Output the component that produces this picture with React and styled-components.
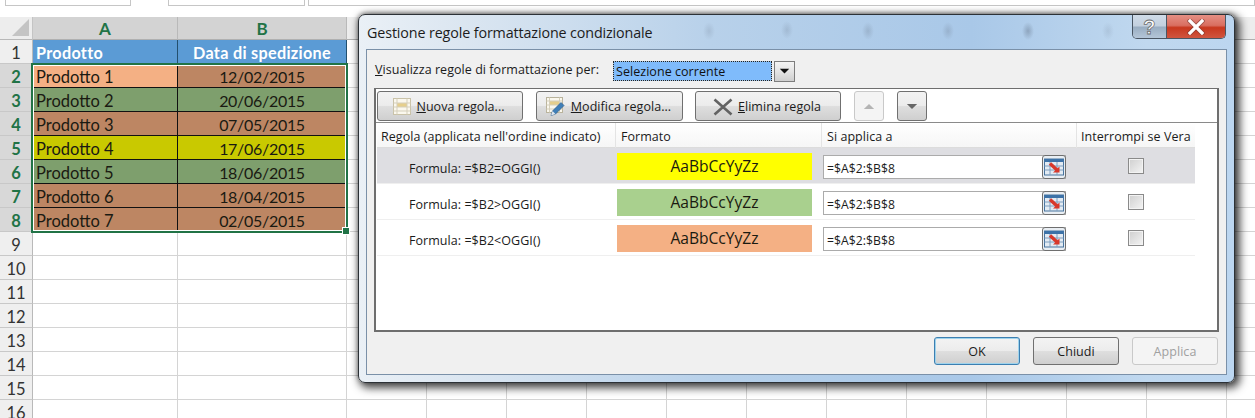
import React from "react";
import styled, { createGlobalStyle } from "styled-components";

const Global = createGlobalStyle`
  html, body { margin: 0; padding: 0; background: #fff; }
  #root { width: 1255px; height: 418px; overflow: hidden; }
`;

const Page = styled.div`
  position: relative;
  width: 1255px;
  height: 418px;
  overflow: hidden;
  background: #fff;
`;

const FormulaStrip = styled.div`
  height: 17px;
  box-sizing: border-box;
  padding-left: 5px;
  display: flex;
  align-items: flex-start;
`;
const StripBox = styled.div`
  height: 6px;
  width: ${(p) => p.$w}px;
  margin-right: ${(p) => p.$gap}px;
  box-sizing: border-box;
  border: 1px solid #c6c6c6;
  border-top: 0;
  background: #fff;
  flex: ${(p) => (p.$grow ? "1" : "none")};
`;

const Sheet = styled.div`
  position: relative;
  display: grid;
  grid-template-columns: 33px 145px 169px repeat(12, 80px);
  grid-template-rows: 23px repeat(16, 24px);
  font-family: Lato, "Liberation Sans", sans-serif;
`;
const Corner = styled.div`
  background: #ededed;
  border-right: 1px solid #c4c4c4;
  border-bottom: 1px solid #b8b8b8;
  box-sizing: border-box;
  display: flex;
  align-items: flex-end;
  justify-content: flex-end;
  padding: 0 3px 3px 0;
`;
const ColHead = styled.div`
  box-sizing: border-box;
  background: ${(p) => (p.$sel ? "#d3d3d3" : "#ededed")};
  border-right: 1px solid #b9b9b9;
  border-bottom: 1px solid #b0b0b0;
  color: #217346;
  font-weight: 700;
  font-size: 17px;
  line-height: 23px;
  text-align: center;
`;
const RowHead = styled.div`
  box-sizing: border-box;
  background: ${(p) => (p.$sel ? "#d8d8d8" : "#efefef")};
  border-right: 1px solid #b9b9b9;
  border-bottom: 1px solid #c8c8c8;
  color: ${(p) => (p.$sel ? "#217346" : "#333")};
  font-weight: ${(p) => (p.$sel ? 700 : 400)};
  font-size: 16.5px;
  padding-top: 3px;
  line-height: 20px;
  text-align: center;
`;
const Cell = styled.div`
  box-sizing: border-box;
  border-right: 1px solid #d4d4d4;
  border-bottom: 1px solid #d4d4d4;
`;
const DataCell = styled.div`
  box-sizing: border-box;
  background: ${(p) => p.$bg};
  border-right: 1px solid #111;
  border-bottom: 1px solid #111;
  color: #1a1a12;
  font-size: ${(p) => (p.$center ? 16 : 16.5)}px;
  letter-spacing: ${(p) => (p.$center ? -0.3 : 0)}px;
  padding: 3px 3px 0;
  line-height: 20px;
  text-align: ${(p) => (p.$center ? "center" : "left")};
`;
const TitleCell = styled.div`
  box-sizing: border-box;
  background: #5b9bd5;
  border-right: 1px solid #23506f;
  border-bottom: 1px solid #23506f;
  color: #fff;
  font-size: 16.2px;
  font-weight: 700;
  letter-spacing: 0.3px;
  padding: 2px 3px 0;
  line-height: 21px;
  text-align: ${(p) => (p.$center ? "center" : "left")};
`;
const Selection = styled.div`
  position: absolute;
  left: 31px;
  top: 46px;
  width: 317px;
  height: 170px;
  box-sizing: border-box;
  border: 2px solid #217346;
  box-shadow: inset 0 0 0 1px #fff;
  pointer-events: none;
`;
const Handle = styled.div`
  position: absolute;
  right: -4px;
  bottom: -4px;
  width: 6px;
  height: 6px;
  background: #217346;
  border: 1px solid #fff;
`;

const Dialog = styled.div`
  position: absolute;
  left: 358px;
  top: 14px;
  width: 877px;
  height: 369px;
  box-sizing: border-box;
  padding: 0 7px 7px 7px;
  display: flex;
  flex-direction: column;
  border: 1px solid #2c3136;
  border-radius: 7px;
  box-shadow: 3px 3px 9px 2px rgba(0, 0, 0, 0.72), 0 -1px 4px rgba(0, 0, 0, 0.35);
  background:
    radial-gradient(ellipse 6px 9px at 350px 16px, rgba(110, 125, 145, 0.22), transparent),
    radial-gradient(ellipse 6px 9px at 428px 15px, rgba(110, 125, 145, 0.25), transparent),
    radial-gradient(ellipse 6px 9px at 509px 16px, rgba(110, 125, 145, 0.3), transparent),
    radial-gradient(ellipse 6px 9px at 589px 16px, rgba(110, 125, 145, 0.3), transparent),
    radial-gradient(ellipse 6px 9px at 669px 16px, rgba(90, 105, 125, 0.4), transparent),
    radial-gradient(ellipse 6px 9px at 749px 16px, rgba(110, 125, 145, 0.18), transparent),
    linear-gradient(90deg, #eaf0f6 0, #dbe6f1 12%, #b8d1ea 40%, #a9c8e8 70%, #c0d8ef 90%, #bcd6f0 100%);
  font-family: "Open Sans", "Noto Sans", sans-serif;
  font-size: 12.5px;
  letter-spacing: 0.05px;
  color: #1b1b1b;
`;
const TitleBar = styled.div`
  flex: none;
  height: 34px;
  display: flex;
  align-items: center;
  justify-content: space-between;
`;
const TitleText = styled.div`
  font-size: 14.3px;
  padding: 1px 0 0 1px;
  letter-spacing: -0.12px;
  color: #1c1c1c;
`;
const Controls = styled.div`
  align-self: flex-start;
  display: flex;
  height: 24px;
  margin-right: 1px;
  border: 1px solid #4a5663;
  border-top: 0;
  border-radius: 0 0 5px 5px;
  overflow: hidden;
  box-sizing: border-box;
`;
const HelpButton = styled.div`
  width: 34px;
  box-sizing: border-box;
  padding-top: 1px;
  background: linear-gradient(#cfdbe8 0, #c3d0de 48%, #99adc1 52%, #b4c6d8 100%);
  border-right: 1px solid #4a5663;
  display: flex;
  align-items: center;
  justify-content: center;
  color: #fff;
  font-family: "Liberation Sans", sans-serif;
  font-size: 20px;
  line-height: 21px;
  font-weight: 700;
  -webkit-text-stroke: 0.8px #6b6b6b;
`;
const CloseButton = styled.div`
  width: 58px;
  background: linear-gradient(#e58f84 0, #d96f61 45%, #c8381f 55%, #d0553f 100%);
  display: flex;
  align-items: center;
  justify-content: center;
`;
const Content = styled.div`
  flex: 1;
  display: flex;
  flex-direction: column;
  padding: 0 7px 0 7px;
  background: #f0f0f0;
  border: 1px solid #7a90a8;
  box-sizing: border-box;
  min-height: 0;
`;
const ScopeRow = styled.div`
  flex: none;
  height: 38px;
  display: flex;
  align-items: center;
  padding-top: 4px;
  box-sizing: border-box;
`;
const ScopeLabel = styled.div`
  width: 239px;
  padding: 0 0 4px 1px;
  box-sizing: border-box;
  white-space: nowrap;
`;
const SelectValue = styled.div`
  width: 159px;
  height: 20px;
  box-sizing: border-box;
  background: #7fbbfb;
  outline: 1px dotted #222;
  outline-offset: -1px;
  border: 1px solid #9dc3e8;
  padding-left: 2px;
  line-height: 20px;
  color: #111;
`;
const SelectArrow = styled.div`
  width: 21px;
  height: 21px;
  margin-left: 2px;
  box-sizing: border-box;
  border: 1px solid #7d7d7d;
  background: linear-gradient(#f4f4f4, #e4e4e4 50%, #cfcfcf);
  display: flex;
  align-items: center;
  justify-content: center;
`;
const RulesPanel = styled.div`
  flex: none;
  height: 244px;
  box-sizing: border-box;
  background: #fff;
  border: 2px solid #6e6e6e;
  border-top-width: 1px;
  display: flex;
  flex-direction: column;
`;
const Toolbar = styled.div`
  flex: none;
  height: 34px;
  box-sizing: border-box;
  padding: 2px 0 0 1px;
  border-bottom: 1px solid #8a8a8a;
  display: flex;
  align-items: flex-start;
`;
const Btn = styled.div`
  width: ${(p) => p.$w}px;
  height: ${(p) => p.$h || 30}px;
  margin-right: ${(p) => p.$gap || 0}px;
  box-sizing: border-box;
  flex: none;
  display: flex;
  align-items: center;
  justify-content: center;
  padding-top: 1px;
  border-radius: 3px;
  border: 1px solid ${(p) => (p.$disabled ? "#c9c9c9" : p.$focus ? "#3c7fb1" : "#707070")};
  background: ${(p) =>
    p.$disabled
      ? "#f4f4f4"
      : "linear-gradient(#f3f3f3 0, #ececec 48%, #dedede 52%, #cfcfcf 100%)"};
  color: ${(p) => (p.$disabled ? "#a0a0a0" : "#1b1b1b")};
  box-shadow: ${(p) => (p.$focus ? "inset 0 0 0 1px #9fd3ec" : "none")};
`;
const ToolBtn = styled(Btn)`
  gap: 5px;
  padding-right: 2px;
`;
const HeaderRow = styled.div`
  display: grid;
  grid-template-columns: 239px 206px 255px 118px;
  height: 25px;
  width: 818px;
  margin-left: 1px;
  box-sizing: border-box;
  border-bottom: 1px solid #dcdcdc;
  background: linear-gradient(#fff, #f6f6f6);
`;
const HeaderCell = styled.div`
  padding-left: ${(p) => p.$pad}px;
  line-height: 27px;
  white-space: nowrap;
  border-right: 1px solid ${(p) => (p.$last ? "transparent" : "#e4e4e4")};
`;
const RuleRow = styled.div`
  display: grid;
  grid-template-columns: 239px 206px 255px 118px;
  width: 818px;
  margin-left: 1px;
  height: 36px;
  padding-top: 2px;
  align-items: center;
  border-bottom: 1px solid #efefef;
  box-sizing: border-box;
  background: ${(p) => (p.$sel ? "#dedee2" : "transparent")};
`;
const RuleName = styled.div`
  padding: 3px 0 0 32px;
`;
const Swatch = styled.div`
  width: 195px;
  height: 27px;
  margin-left: 1px;
  background: ${(p) => p.$bg};
  text-align: center;
  line-height: 27px;
  font-size: 15.6px;
  letter-spacing: 0;
  color: #1a1a10;
`;
const RangeField = styled.div`
  width: 243px;
  height: 24px;
  margin-left: 1px;
  box-sizing: border-box;
  background: #fff;
  border: 1px solid #ababab;
  display: flex;
  align-items: center;
  justify-content: space-between;
  padding-left: 3px;
  font-size: 12.2px;
`;
const RangeText = styled.span`
  padding-top: 3px;
`;
const RangeBtn = styled.div`
  width: 24px;
  height: 24px;
  margin: -1px;
  box-sizing: border-box;
  border: 1px solid #6f6f6f;
  border-radius: 3px;
  background: #e9eef3;
  display: flex;
  align-items: center;
  justify-content: center;
`;
const CheckCell = styled.div`
  display: flex;
  justify-content: center;
`;
const Check = styled.div`
  width: 16px;
  height: 16px;
  box-sizing: border-box;
  border: 1px solid #8a8a8a;
  background: linear-gradient(135deg, #cfcfcf, #f4f4f4);
  box-shadow: inset 0 0 0 1px #f3f3f3;
  margin-top: -2px;
`;
const Footer = styled.div`
  flex: 1;
  display: flex;
  justify-content: flex-end;
  gap: 13px;
  padding: 5px 1px 0 0;
  box-sizing: border-box;
`;

const GridIcon = () => (
  <svg width="18" height="17" viewBox="0 0 18 17">
    <rect x="0.5" y="0.5" width="17" height="16" fill="#fbf8ee" stroke="#c9c2a8" />
    <rect x="4" y="5" width="10" height="4" fill="#e6cf8c" />
    <path d="M0.5 5h17M0.5 9h17M0.5 13h17M4 0.5v16M14 0.5v16" stroke="#d5cfbb" fill="none" />
  </svg>
);
const EditIcon = () => (
  <svg width="20" height="19" viewBox="0 0 20 19">
    <rect x="0.5" y="0.5" width="16" height="15" fill="#fbf8ee" stroke="#b9b39c" />
    <rect x="3.5" y="4" width="10" height="4" fill="#e6cf8c" />
    <path d="M0.5 4h16M0.5 8h16M0.5 12h16M3.5 0.5v15M13.5 0.5v15" stroke="#d5cfbb" fill="none" />
    <path d="M5 18.5l1.5-4.5 8.5-8.5 3 3-8.5 8.5z" fill="#3f7fb8" stroke="#2c5a86" strokeWidth="0.7" />
    <path d="M5 18.5l1.5-4.5 3 3z" fill="#dfe6ee" />
  </svg>
);
const CrossIcon = () => (
  <svg width="20" height="18" viewBox="0 0 20 18">
    <path d="M1.5 1.5L18.5 16.5M18.5 1.5L1.5 16.5" stroke="#636363" strokeWidth="2.6" />
  </svg>
);
const RangeIcon = () => (
  <svg width="20" height="18" viewBox="0 0 20 18">
    <rect x="0.5" y="1" width="19" height="16" fill="#e3ebf3" stroke="#48749f" />
    <rect x="0.5" y="1" width="19" height="3" fill="#3c72a8" />
    <path d="M0.5 8h19M0.5 12h19M6 4v13M13 4v13" stroke="#7f9fbf" fill="none" />
    <path d="M6 5.5L13 12" stroke="#d8382b" strokeWidth="3.4" />
    <path d="M15.5 8.5V14.5H9z" fill="#d8382b" />
  </svg>
);
const Tri = ({ up, color, size = 14 }) => (
  <svg width={size} height={size * 0.58} viewBox="0 0 14 8">
    <path d={up ? "M7 1L13 7H1z" : "M1 1h12L7 7z"} fill={color} />
  </svg>
);

const rows = [
  ["Prodotto 1", "12/02/2015", "#f4b084", "#bd8663"],
  ["Prodotto 2", "20/06/2015", "#7e9f6d", "#7e9f6d"],
  ["Prodotto 3", "07/05/2015", "#bd8663", "#bd8663"],
  ["Prodotto 4", "17/06/2015", "#c9c900", "#c9c900"],
  ["Prodotto 5", "18/06/2015", "#7e9f6d", "#7e9f6d"],
  ["Prodotto 6", "18/04/2015", "#bd8663", "#bd8663"],
  ["Prodotto 7", "02/05/2015", "#bd8663", "#bd8663"],
];
const rules = [
  ["Formula: =$B2=OGGI()", "#ffff00", true],
  ["Formula: =$B2>OGGI()", "#a9d08e", false],
  ["Formula: =$B2<OGGI()", "#f4b084", false],
];
const spare = Array.from({ length: 12 });

export default function App() {
  return (
    <Page>
      <Global />
      <FormulaStrip>
        <StripBox $w={126} $gap={37} />
        <StripBox $w={137} $gap={3} />
        <StripBox $grow $w={0} $gap={0} />
      </FormulaStrip>
      <Sheet>
        <Corner>
          <svg width="17" height="17" viewBox="0 0 17 17">
            <path d="M17 0V17H0z" fill="#c4c4c4" />
          </svg>
        </Corner>
        <ColHead $sel>A</ColHead>
        <ColHead $sel>B</ColHead>
        {spare.map((_, i) => (
          <ColHead key={i} />
        ))}

        <RowHead>1</RowHead>
        <TitleCell>Prodotto</TitleCell>
        <TitleCell $center>Data di spedizione</TitleCell>
        {spare.map((_, i) => (
          <Cell key={i} />
        ))}

        {rows.map(([name, date, a, b], r) => (
          <React.Fragment key={name}>
            <RowHead $sel>{r + 2}</RowHead>
            <DataCell $bg={a}>{name}</DataCell>
            <DataCell $bg={b} $center>
              {date}
            </DataCell>
            {spare.map((_, i) => (
              <Cell key={i} />
            ))}
          </React.Fragment>
        ))}

        {[9, 10, 11, 12, 13, 14, 15, 16].map((n) => (
          <React.Fragment key={n}>
            <RowHead>{n}</RowHead>
            <Cell />
            <Cell />
            {spare.map((_, i) => (
              <Cell key={i} />
            ))}
          </React.Fragment>
        ))}
        <Selection>
          <Handle />
        </Selection>
      </Sheet>

      <Dialog>
        <TitleBar>
          <TitleText>Gestione regole formattazione condizionale</TitleText>
          <Controls>
            <HelpButton>?</HelpButton>
            <CloseButton>
              <svg width="18" height="16" viewBox="0 0 18 16">
                <path d="M3 2l12 12M15 2L3 14" stroke="#7a3a32" strokeWidth="5" strokeLinecap="square" opacity="0.6" />
                <path d="M3 2l12 12M15 2L3 14" stroke="#fff" strokeWidth="3.2" strokeLinecap="square" />
              </svg>
            </CloseButton>
          </Controls>
        </TitleBar>
        <Content>
          <ScopeRow>
            <ScopeLabel>
              <u>V</u>isualizza regole di formattazione per:
            </ScopeLabel>
            <SelectValue>Selezione corrente</SelectValue>
            <SelectArrow>
              <Tri color="#111" size={11} />
            </SelectArrow>
          </ScopeRow>
          <RulesPanel>
            <Toolbar>
              <ToolBtn $w={146} $gap={13}>
                <GridIcon />
                <span>
                  <u>N</u>uova regola...
                </span>
              </ToolBtn>
              <ToolBtn $w={147} $gap={12}>
                <EditIcon />
                <span>
                  <u>M</u>odifica regola...
                </span>
              </ToolBtn>
              <ToolBtn $w={146} $gap={13}>
                <CrossIcon />
                <span>
                  <u>E</u>limina regola
                </span>
              </ToolBtn>
              <Btn $w={30} $gap={13} $disabled>
                <Tri up color="#b4b4b4" size={12} />
              </Btn>
              <Btn $w={30}>
                <Tri color="#666" size={12} />
              </Btn>
            </Toolbar>
            <HeaderRow>
              <HeaderCell $pad={4}>Regola (applicata nell'ordine indicato)</HeaderCell>
              <HeaderCell $pad={5}>Formato</HeaderCell>
              <HeaderCell $pad={5}>Si applica a</HeaderCell>
              <HeaderCell $pad={4} $last>Interrompi se Vera</HeaderCell>
            </HeaderRow>
            {rules.map(([text, color, sel]) => (
              <RuleRow key={text} $sel={sel}>
                <RuleName>{text}</RuleName>
                <Swatch $bg={color}>AaBbCcYyZz</Swatch>
                <RangeField>
                  <RangeText>=$A$2:$B$8</RangeText>
                  <RangeBtn>
                    <RangeIcon />
                  </RangeBtn>
                </RangeField>
                <CheckCell>
                  <Check />
                </CheckCell>
              </RuleRow>
            ))}
          </RulesPanel>
          <Footer>
            <Btn $w={86} $h={28} $focus>OK</Btn>
            <Btn $w={86} $h={28}>Chiudi</Btn>
            <Btn $w={86} $h={28} $disabled>Applica</Btn>
          </Footer>
        </Content>
      </Dialog>
    </Page>
  );
}
